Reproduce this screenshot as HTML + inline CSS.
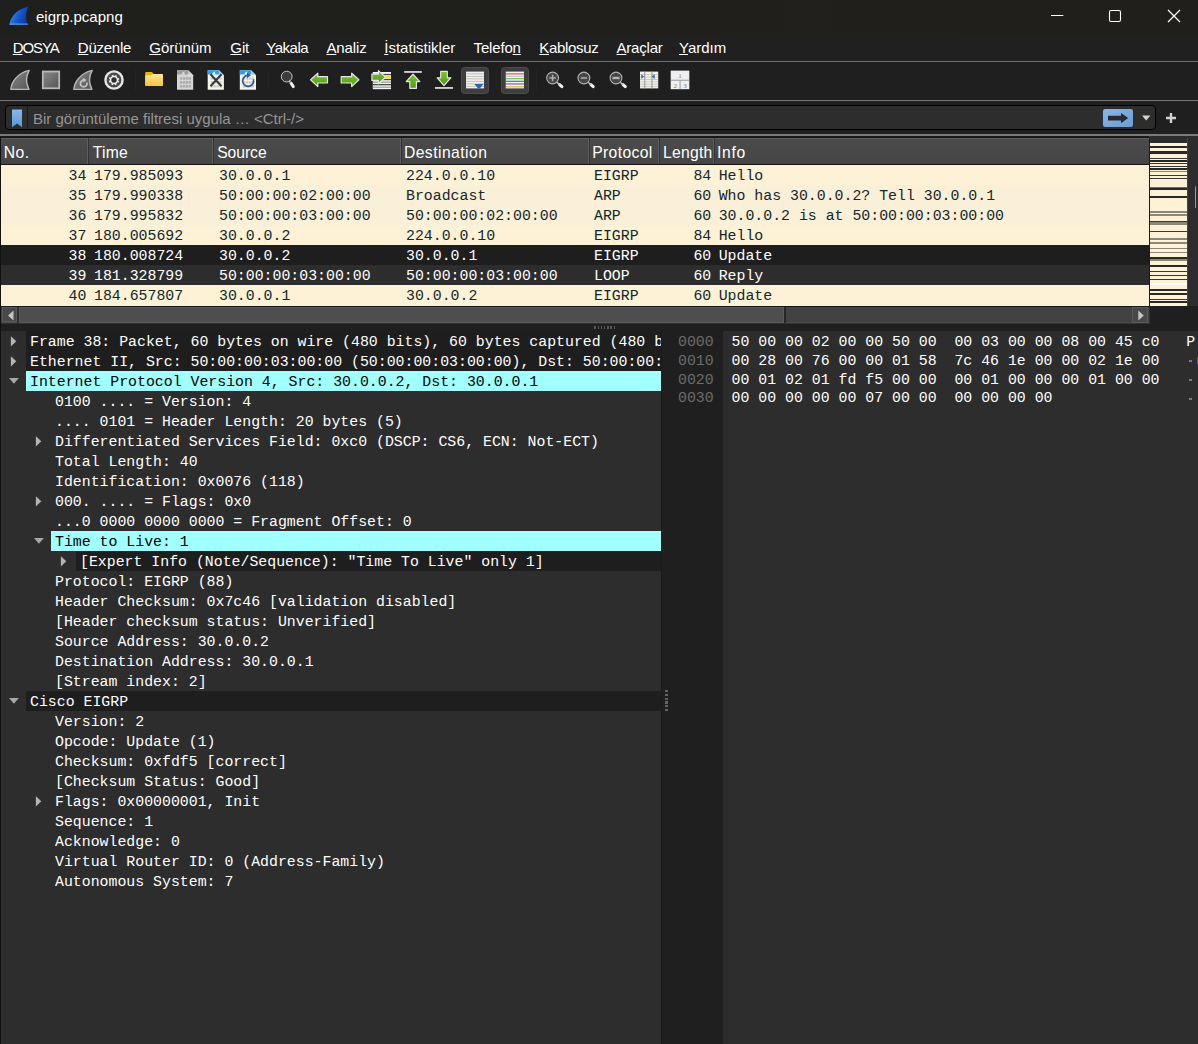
<!DOCTYPE html>
<html><head><meta charset="utf-8">
<style>
*{box-sizing:border-box;margin:0;padding:0}
html,body{width:1198px;height:1044px;overflow:hidden;background:#1f1f1f}
body{position:relative;font-family:"Liberation Sans",sans-serif;color:#fff}
.abs{position:absolute}
#title{left:0;top:0;width:1198px;height:35px;background:linear-gradient(90deg,#1f201b,#211f1b)}
#title .t{left:36px;top:8px;font-size:15px;color:#fff;white-space:nowrap}
#menu{left:0;top:35px;width:1198px;height:26px;background:#202020}
#menu span{position:absolute;top:4px;font-size:15px;color:#fff;white-space:nowrap}
#menu u{text-decoration:underline;text-underline-offset:1px;text-decoration-thickness:1px}
#tb{left:0;top:61px;width:1198px;height:40px;background:#1f1f1f;border-top:1px solid #707070}
#fl{left:0;top:100px;width:1198px;height:36px;background:#1f1f1f;border-top:1px solid #727272}
#fbox{left:5px;top:105px;width:1151px;height:25px;background:#2d2d2d;border:1px solid #000;border-radius:4px}
#fbox .ph{left:27px;top:4px;font-size:15px;color:#959595;white-space:nowrap}
#hl{left:0;top:134px;width:1198px;height:2px;background:#7a7a7a}
#hdr{left:1px;top:138px;width:1148px;height:26px;background:linear-gradient(#4b4b4b,#454545);border-top:1px solid #5e5e5e}
#hdr span{position:absolute;top:5px;font-size:15.7px;color:#fff;white-space:nowrap}
#hdr i{position:absolute;top:-1px;width:1px;height:26px;background:#5e5e5e}
#hdr b{position:absolute;top:-1px;width:1px;height:26px;background:#333}
.row{position:absolute;left:1px;width:1148px;height:20px;font-family:"Liberation Mono",monospace;font-size:14.87px;line-height:20px;color:#12272e;white-space:pre}
.row span{position:absolute;top:1px}
.tr{position:absolute;font-family:"Liberation Mono",monospace;font-size:14.87px;line-height:22px;color:#fff;white-space:pre;height:20px;overflow:hidden}
.hx{position:absolute;font-family:"Liberation Mono",monospace;font-size:14.87px;line-height:19px;color:#fff;white-space:pre}
</style></head><body>
<div id="title" class="abs"><div class="t abs">eigrp.pcapng</div>
<svg class="abs" style="left:0;top:0" width="1198" height="35" viewBox="0 0 1198 35">
<defs><linearGradient id="gws" x1="0" y1="0.2" x2="1" y2="0.6"><stop offset="0" stop-color="#3f95f5"/><stop offset="0.55" stop-color="#1257d0"/><stop offset="1" stop-color="#0a35a5"/></linearGradient></defs>
<path d="M9.4 24.8 C10 18.5 15 9.5 28.6 6.4 C25.4 12 25 19 28 24.8 Z" fill="url(#gws)"/>
<path d="M9.4 24.8 L28 24.8 L27.7 23.4 L9.8 23.6Z" fill="#6aaaf5" opacity="0.8"/>
<path d="M1051 15.5 h12.3" stroke="#fff" stroke-width="1"/>
<rect x="1109.5" y="10.5" width="11" height="11" rx="1.6" fill="none" stroke="#fff" stroke-width="1.1"/>
<path d="M1168 10 L1180 22 M1180 10 L1168 22" stroke="#fff" stroke-width="1.25"/>
</svg></div>
<div id="menu" class="abs">
<span style="left:12.7px;letter-spacing:-1.10px"><u>D</u>OSYA</span>
<span style="left:77.8px;letter-spacing:-0.25px"><u>D</u>üzenle</span>
<span style="left:149.3px;letter-spacing:-0.05px"><u>G</u>örünüm</span>
<span style="left:230.3px;letter-spacing:-0.10px"><u>G</u>it</span>
<span style="left:266.2px;letter-spacing:-0.45px"><u>Y</u>akala</span>
<span style="left:326.4px;letter-spacing:-0.10px"><u>A</u>naliz</span>
<span style="left:384.2px;letter-spacing:0.02px"><u>İ</u>statistikler</span>
<span style="left:473.6px;letter-spacing:-0.17px">Telefo<u>n</u></span>
<span style="left:539.3px;letter-spacing:-0.32px"><u>K</u>ablosuz</span>
<span style="left:616.5px;letter-spacing:-0.20px"><u>A</u>raçlar</span>
<span style="left:679.0px;letter-spacing:0.00px"><u>Y</u>ardım</span>
</div>
<div id="tb" class="abs"></div>
<div id="fl" class="abs"></div>
<svg class="abs" style="left:0;top:61px" width="1198" height="40" viewBox="0 61 1198 40">
<defs>
<linearGradient id="gfin" x1="0" y1="0" x2="1" y2="1"><stop offset="0" stop-color="#8a8a8a"/><stop offset="1" stop-color="#545454"/></linearGradient>
<linearGradient id="ggr" x1="0" y1="0" x2="0" y2="1"><stop offset="0" stop-color="#7cc62c"/><stop offset="1" stop-color="#4a9c12"/></linearGradient>
<linearGradient id="gfo" x1="0" y1="0" x2="0" y2="1"><stop offset="0" stop-color="#ffe594"/><stop offset="1" stop-color="#f6c43c"/></linearGradient>
</defs>
<rect x="461.5" y="67.5" width="27" height="26" rx="3" fill="#3e3e3e" stroke="#4c4c4c" stroke-width="1"/>
<rect x="501.5" y="67.5" width="27" height="26" rx="3" fill="#3e3e3e" stroke="#4c4c4c" stroke-width="1"/>
<rect x="135" y="70" width="1" height="20" fill="#252525"/>
<rect x="268" y="70" width="1" height="20" fill="#252525"/>
<rect x="495.5" y="70" width="1" height="20" fill="#252525"/>
<rect x="536" y="70" width="1" height="20" fill="#252525"/>
<path d="M10.8 89.4 C11.4 83 16.2 73.5 29.2 70.4 C26.0 76 25.8 83 28.9 89.4 Z" fill="url(#gfin)" stroke="#b8b8b8" stroke-width="1.4" stroke-linejoin="round"/>
<rect x="42.8" y="71.5" width="16.4" height="16.8" fill="url(#gfin)" stroke="#b8b8b8" stroke-width="1.8"/>
<path d="M73.8 89.4 C74.4 83 79.2 73.5 92.2 70.4 C89.0 76 88.8 83 91.9 89.4 Z" fill="url(#gfin)" stroke="#b8b8b8" stroke-width="1.4" stroke-linejoin="round"/>
<path d="M83.4 80.2 A3.3 3.3 0 1 0 86.9 82.6" fill="none" stroke="#c2c2c2" stroke-width="1.7"/><path d="M82.8 77.8 L86.8 80 L83.2 82.6Z" fill="#c2c2c2"/>
<circle cx="114" cy="80" r="8.6" fill="#474747" stroke="#e6e6e6" stroke-width="2.4"/>
<circle cx="114" cy="80" r="3.5" fill="#2e2e2e" stroke="#f0f0f0" stroke-width="1.6"/>
<circle cx="114" cy="80" r="4.7" fill="none" stroke="#f0f0f0" stroke-width="1.1" stroke-dasharray="1.846 1.846" transform="rotate(10 114 80)"/>
<path d="M145.2 73 q0 -1 1 -1 h5.2 q0.8 0 1.4 0.8 l0.9 1.2 h8.3 q1 0 1 1 v10 q0 1 -1 1 h-15.8 q-1 0 -1 -1z" fill="#f2b200"/>
<path d="M145.2 76.2 q0 -1 1 -1 h5 l1.6 -1.2 h9.2 q1 0 1 1 v10 q0 1 -1 1 h-15.8 q-1 0 -1 -1z" fill="url(#gfo)"/>
<path d="M177 70.2 h11.2 l5 5 v14.6 h-16.2z" fill="#d6d6d6"/>
<path d="M177 70.2 h11.2 l4.3 4.3 h-15.5z" fill="#9e9e9e"/>
<path d="M181.2 74.6 Q182.0 71.8 184.6 71.2 Q183.8 72.8 185.0 74.6Z" fill="#d6d6d6"/>
<path d="M188.2 70.2 v5 h5z" fill="#ececec" opacity="0.6"/>
<rect x="179.9" y="77.3" width="2.4" height="2.4" fill="#ababab"/>
<rect x="182.8" y="77.3" width="2.4" height="2.4" fill="#ababab"/>
<rect x="185.7" y="77.3" width="2.4" height="2.4" fill="#ababab"/>
<rect x="188.6" y="77.3" width="2.4" height="2.4" fill="#ababab"/>
<rect x="179.9" y="81.2" width="2.4" height="2.4" fill="#ababab"/>
<rect x="182.8" y="81.2" width="2.4" height="2.4" fill="#ababab"/>
<rect x="185.7" y="81.2" width="2.4" height="2.4" fill="#ababab"/>
<rect x="188.6" y="81.2" width="2.4" height="2.4" fill="#ababab"/>
<rect x="179.9" y="85.1" width="2.4" height="2.4" fill="#ababab"/>
<rect x="182.8" y="85.1" width="2.4" height="2.4" fill="#ababab"/>
<rect x="185.7" y="85.1" width="2.4" height="2.4" fill="#ababab"/>
<rect x="188.6" y="85.1" width="2.4" height="2.4" fill="#ababab"/>
<path d="M207.7 70.2 h11.2 l5 5 v14.6 h-16.2z" fill="#f5f5ea"/>
<path d="M207.7 70.2 h11.2 l4.3 4.3 h-15.5z" fill="#2f9fea"/>
<path d="M211.9 74.6 Q212.7 71.8 215.3 71.2 Q214.5 72.8 215.7 74.6Z" fill="#f5f5ea"/>
<path d="M218.89999999999998 70.2 v5 h5z" fill="#ececec" opacity="0.6"/>
<rect x="210.6" y="77.3" width="2.4" height="2.4" fill="#cdcdbe"/>
<rect x="213.5" y="77.3" width="2.4" height="2.4" fill="#cdcdbe"/>
<rect x="216.4" y="77.3" width="2.4" height="2.4" fill="#cdcdbe"/>
<rect x="219.3" y="77.3" width="2.4" height="2.4" fill="#cdcdbe"/>
<rect x="210.6" y="81.2" width="2.4" height="2.4" fill="#cdcdbe"/>
<rect x="213.5" y="81.2" width="2.4" height="2.4" fill="#cdcdbe"/>
<rect x="216.4" y="81.2" width="2.4" height="2.4" fill="#cdcdbe"/>
<rect x="219.3" y="81.2" width="2.4" height="2.4" fill="#cdcdbe"/>
<rect x="210.6" y="85.1" width="2.4" height="2.4" fill="#cdcdbe"/>
<rect x="213.5" y="85.1" width="2.4" height="2.4" fill="#cdcdbe"/>
<rect x="216.4" y="85.1" width="2.4" height="2.4" fill="#cdcdbe"/>
<rect x="219.3" y="85.1" width="2.4" height="2.4" fill="#cdcdbe"/>
<path d="M210.5 74.3 L221.5 86.2 M221.5 74.3 L210.5 86.2" stroke="#363b41" stroke-width="2.1" fill="none"/>
<path d="M239.8 70.2 h11.2 l5 5 v14.6 h-16.2z" fill="#f5f5ea"/>
<path d="M239.8 70.2 h11.2 l4.3 4.3 h-15.5z" fill="#2f9fea"/>
<path d="M244.0 74.6 Q244.8 71.8 247.4 71.2 Q246.6 72.8 247.8 74.6Z" fill="#f5f5ea"/>
<path d="M251.0 70.2 v5 h5z" fill="#ececec" opacity="0.6"/>
<rect x="242.7" y="77.3" width="2.4" height="2.4" fill="#cdcdbe"/>
<rect x="245.6" y="77.3" width="2.4" height="2.4" fill="#cdcdbe"/>
<rect x="248.5" y="77.3" width="2.4" height="2.4" fill="#cdcdbe"/>
<rect x="251.4" y="77.3" width="2.4" height="2.4" fill="#cdcdbe"/>
<rect x="242.7" y="81.2" width="2.4" height="2.4" fill="#cdcdbe"/>
<rect x="245.6" y="81.2" width="2.4" height="2.4" fill="#cdcdbe"/>
<rect x="248.5" y="81.2" width="2.4" height="2.4" fill="#cdcdbe"/>
<rect x="251.4" y="81.2" width="2.4" height="2.4" fill="#cdcdbe"/>
<rect x="242.7" y="85.1" width="2.4" height="2.4" fill="#cdcdbe"/>
<rect x="245.6" y="85.1" width="2.4" height="2.4" fill="#cdcdbe"/>
<rect x="248.5" y="85.1" width="2.4" height="2.4" fill="#cdcdbe"/>
<rect x="251.4" y="85.1" width="2.4" height="2.4" fill="#cdcdbe"/>
<path d="M253.4 79.2 A5.5 5.5 0 1 1 247.4 75.4" fill="none" stroke="#2a5aa2" stroke-width="1.7"/><path d="M247 72.6 L250.8 75.3 L247 78.2Z" fill="#2a5aa2"/>
<circle cx="286.7" cy="76.6" r="5.4" fill="#3c3c3c" stroke="#c8c8c8" stroke-width="1"/>
<path d="M291 83.2 L293.3 86.6" stroke="#f0f0f0" stroke-width="3" stroke-linecap="round"/>
<path d="M289 80.5 L291 83.2" stroke="#bdbdbd" stroke-width="1.3"/>
<path d="M310.6 79.8 L317.8 73.2 L317.8 76.7 L327.5 76.7 L327.5 83 L317.8 83 L317.8 86.6Z" fill="url(#ggr)" stroke="#e6e6e6" stroke-width="1.2" stroke-linejoin="round"/>
<path d="M358.9 79.8 L351.7 73.2 L351.7 76.7 L341.2 76.7 L341.2 83 L351.7 83 L351.7 86.6Z" fill="url(#ggr)" stroke="#e6e6e6" stroke-width="1.2" stroke-linejoin="round"/>
<rect x="372.8" y="72" width="18.2" height="17.2" fill="#f4f4f4"/>
<rect x="372.8" y="73.9" width="18.2" height="1.3" fill="#474d4e"/>
<rect x="372.8" y="76.6" width="18.2" height="1.3" fill="#b5b5b5"/>
<rect x="372.8" y="78.9" width="18.2" height="1.3" fill="#474d4e"/>
<rect x="372.8" y="81.5" width="18.2" height="1.3" fill="#9c9c9c"/>
<rect x="372.8" y="84" width="18.2" height="1.3" fill="#474d4e"/>
<rect x="372.8" y="86.6" width="18.2" height="1.3" fill="#a2a2a2"/>
<rect x="385.8" y="75.4" width="5.2" height="3.2" fill="#fbe030"/>
<path d="M385.6 77.2 L378.4 70.6 L378.4 74.2 L371.9 74.2 L371.9 80.4 L378.4 80.4 L378.4 83.8Z" fill="url(#ggr)" stroke="#e6e6e6" stroke-width="1.2" stroke-linejoin="round"/>
<rect x="404.2" y="71" width="17.6" height="1.9" fill="#cfcfcf"/>
<path d="M413 74.2 L419.8 81.6 L416.4 81.6 L416.4 88.3 L409.8 88.3 L409.8 81.6 L406.2 81.6Z" fill="url(#ggr)" stroke="#e6e6e6" stroke-width="1.2" stroke-linejoin="round"/>
<rect x="435" y="87" width="18" height="1.9" fill="#cfcfcf"/>
<path d="M444 85.6 L450.8 77.8 L447.3 77.8 L447.3 71.4 L440.7 71.4 L440.7 77.8 L437.2 77.8Z" fill="url(#ggr)" stroke="#e6e6e6" stroke-width="1.2" stroke-linejoin="round"/>
<rect x="466" y="71.6" width="18" height="16.8" fill="#f2f2f2"/>
<rect x="466" y="73.4" width="18" height="0.9" fill="#b9b9ae"/>
<rect x="466" y="75.9" width="18" height="0.9" fill="#b9b9ae"/>
<rect x="466" y="78.4" width="18" height="0.9" fill="#b9b9ae"/>
<rect x="466" y="80.9" width="18" height="0.9" fill="#b9b9ae"/>
<rect x="466" y="83.4" width="18" height="0.9" fill="#b9b9ae"/>
<rect x="466" y="85.9" width="18" height="0.9" fill="#b9b9ae"/>
<path d="M474.2 84 h9.4 l-3 3.2 v1.4 h-3.4 v-1.4z" fill="#2e62b5"/>
<rect x="505.8" y="71.6" width="18.2" height="16.8" fill="#f4f4f4"/>
<rect x="505.8" y="73.2" width="18.2" height="1.3" fill="#ee5f5f"/>
<rect x="505.8" y="75.6" width="18.2" height="1.3" fill="#b9c4dd"/>
<rect x="505.8" y="78" width="18.2" height="1.3" fill="#7dc83d"/>
<rect x="505.8" y="80.7" width="18.2" height="1.3" fill="#4a7fd0"/>
<rect x="505.8" y="83.3" width="18.2" height="1.3" fill="#8e6ea5"/>
<rect x="505.8" y="86.2" width="18.2" height="1.3" fill="#e0b83a"/>
<path d="M559.6 84.6 L561.9 86.7" stroke="#f2f2f2" stroke-width="3" stroke-linecap="round"/>
<path d="M556.6 82.0 L559.6 84.6" stroke="#c4c4c4" stroke-width="1.4"/>
<circle cx="552.6" cy="78" r="5.9" fill="#464646" stroke="#b4b4b4" stroke-width="1.1"/>
<path d="M549.4 78 h6.4 M552.6 74.8 v6.4" stroke="#b0b0b0" stroke-width="1.5"/>
<path d="M590.9 84.6 L593.2 86.7" stroke="#f2f2f2" stroke-width="3" stroke-linecap="round"/>
<path d="M587.9 82.0 L590.9 84.6" stroke="#c4c4c4" stroke-width="1.4"/>
<circle cx="583.9" cy="78" r="5.9" fill="#464646" stroke="#b4b4b4" stroke-width="1.1"/>
<path d="M580.7 78 h6.4" stroke="#b0b0b0" stroke-width="1.5"/>
<path d="M623.0 84.6 L625.3 86.7" stroke="#f2f2f2" stroke-width="3" stroke-linecap="round"/>
<path d="M620.0 82.0 L623.0 84.6" stroke="#c4c4c4" stroke-width="1.4"/>
<circle cx="616.0" cy="78" r="5.9" fill="#464646" stroke="#b4b4b4" stroke-width="1.1"/>
<path d="M612.5 78 h7" stroke="#b4b4b4" stroke-width="2.4"/>
<rect x="640" y="71.6" width="18.2" height="16.8" fill="#f1f1ec"/>
<rect x="640" y="74.2" width="18.2" height="0.8" fill="#c4c4ba"/>
<rect x="640" y="76.6" width="18.2" height="0.8" fill="#c4c4ba"/>
<rect x="640" y="79" width="18.2" height="0.8" fill="#c4c4ba"/>
<rect x="640" y="81.4" width="18.2" height="0.8" fill="#c4c4ba"/>
<rect x="640" y="83.8" width="18.2" height="0.8" fill="#c4c4ba"/>
<rect x="640" y="86.2" width="18.2" height="0.8" fill="#c4c4ba"/>
<rect x="644.2" y="71.6" width="1.1" height="16.8" fill="#9a9a9a"/>
<rect x="651.4" y="71.6" width="1.1" height="16.8" fill="#9a9a9a"/>
<path d="M641.3 74.2 L644 76.6 L641.3 79Z" fill="#2e62b5"/><path d="M654.6 74.2 L651.9 76.6 L654.6 79Z" fill="#2e62b5"/>
<rect x="670.7" y="70.6" width="18.6" height="18.6" fill="#efefef"/>
<rect x="670.7" y="79.7" width="18.6" height="1.1" fill="#9e9e9e"/><rect x="679.5" y="80.5" width="1.1" height="8.7" fill="#9e9e9e"/>
<g font-family="Liberation Serif" font-size="7" fill="#7a7a7a" text-anchor="middle"><text x="680" y="78">1</text><text x="675.3" y="87.6">2</text><text x="685" y="87.6">3</text></g>
</svg>
<div id="fbox" class="abs"><div class="ph abs">Bir görüntüleme filtresi uygula … &lt;Ctrl-/&gt;</div></div>
<svg class="abs" style="left:0;top:101px" width="1198" height="33" viewBox="0 101 1198 33">
<defs><linearGradient id="gbm" x1="0" y1="0" x2="0" y2="1"><stop offset="0" stop-color="#8ab8ea"/><stop offset="1" stop-color="#5a98d8"/></linearGradient>
<linearGradient id="gap" x1="0" y1="0" x2="1" y2="1"><stop offset="0" stop-color="#86b6ea"/><stop offset="1" stop-color="#6a9dd6"/></linearGradient></defs>
<path d="M12 109.4 h10 v17.8 l-5 -3.6 l-5 3.6z" fill="url(#gbm)"/>
<rect x="27" y="106" width="1" height="23" fill="#1a1a1a"/>
<rect x="1103" y="109" width="30" height="18" rx="2.2" fill="url(#gap)"/>
<path d="M1108 115.8 h13 v-2.8 l7.2 5.1 l-7.2 5.1 v-2.8 h-13z" fill="#2a2a2a"/>
<path d="M1142 115.4 h8.4 l-4.2 5z" fill="#d6d6ca"/>
<path d="M1166 118 h10 M1171 113 v10" stroke="#d2d2d2" stroke-width="2.4"/>
</svg>
<div id="hl" class="abs"></div>
<div id="hdr" class="abs">
<span style="left:2.7px;letter-spacing:0.50px">No.</span>
<i style="left:86.0px"></i><b style="left:87.0px"></b>
<span style="left:91.8px;letter-spacing:0.20px">Time</span>
<i style="left:211.0px"></i><b style="left:212.0px"></b>
<span style="left:216.2px;letter-spacing:-0.05px">Source</span>
<i style="left:399.0px"></i><b style="left:400.0px"></b>
<span style="left:402.9px;letter-spacing:0.45px">Destination</span>
<i style="left:587.0px"></i><b style="left:588.0px"></b>
<span style="left:591.2px;letter-spacing:0.37px">Protocol</span>
<i style="left:657.0px"></i><b style="left:658.0px"></b>
<span style="left:661.9px;letter-spacing:0.28px">Length</span>
<i style="left:712.0px"></i><b style="left:713.0px"></b>
<span style="left:716.0px;letter-spacing:0.65px">Info</span>
</div>
<div class="row" style="top:165px;background:#fdf2d6;color:#12272e">
<span style="left:67.5px">34</span>
<span style="left:93.0px">179.985093</span>
<span style="left:218.0px">30.0.0.1</span>
<span style="left:405.0px">224.0.0.10</span>
<span style="left:593.0px">EIGRP</span>
<span style="left:692.4px">84</span>
<span style="left:717.7px">Hello</span>
</div>
<div class="row" style="top:185px;background:#faf0d7;color:#12272e">
<span style="left:67.5px">35</span>
<span style="left:93.0px">179.990338</span>
<span style="left:218.0px">50:00:00:02:00:00</span>
<span style="left:405.0px">Broadcast</span>
<span style="left:593.0px">ARP</span>
<span style="left:692.4px">60</span>
<span style="left:717.7px">Who has 30.0.0.2? Tell 30.0.0.1</span>
</div>
<div class="row" style="top:205px;background:#faf0d7;color:#12272e">
<span style="left:67.5px">36</span>
<span style="left:93.0px">179.995832</span>
<span style="left:218.0px">50:00:00:03:00:00</span>
<span style="left:405.0px">50:00:00:02:00:00</span>
<span style="left:593.0px">ARP</span>
<span style="left:692.4px">60</span>
<span style="left:717.7px">30.0.0.2 is at 50:00:00:03:00:00</span>
</div>
<div class="row" style="top:225px;background:#fdf2d6;color:#12272e">
<span style="left:67.5px">37</span>
<span style="left:93.0px">180.005692</span>
<span style="left:218.0px">30.0.0.2</span>
<span style="left:405.0px">224.0.0.10</span>
<span style="left:593.0px">EIGRP</span>
<span style="left:692.4px">84</span>
<span style="left:717.7px">Hello</span>
</div>
<div class="row" style="top:245px;background:#1e1e1e;color:#ffffff">
<span style="left:67.5px">38</span>
<span style="left:93.0px">180.008724</span>
<span style="left:218.0px">30.0.0.2</span>
<span style="left:405.0px">30.0.0.1</span>
<span style="left:593.0px">EIGRP</span>
<span style="left:692.4px">60</span>
<span style="left:717.7px">Update</span>
</div>
<div class="row" style="top:265px;background:#2d2d2d;color:#ffffff">
<span style="left:67.5px">39</span>
<span style="left:93.0px">181.328799</span>
<span style="left:218.0px">50:00:00:03:00:00</span>
<span style="left:405.0px">50:00:00:03:00:00</span>
<span style="left:593.0px">LOOP</span>
<span style="left:692.4px">60</span>
<span style="left:717.7px">Reply</span>
</div>
<div class="row" style="top:285px;background:#fdf2d6;color:#12272e">
<span style="left:67.5px">40</span>
<span style="left:93.0px">184.657807</span>
<span style="left:218.0px">30.0.0.1</span>
<span style="left:405.0px">30.0.0.2</span>
<span style="left:593.0px">EIGRP</span>
<span style="left:692.4px">60</span>
<span style="left:717.7px">Update</span>
</div>
<div class="abs" style="left:0;top:136px;width:1px;height:908px;background:#121212"></div>
<div class="abs" style="left:0;top:136px;width:1198px;height:2px;background:#191919"></div>
<div class="abs" style="left:1px;top:164px;width:1148px;height:1px;background:#141414"></div>
<div class="abs" style="left:1149px;top:136px;width:49px;height:170px;background:#2d2d2d"></div>
<div class="abs" style="left:1150px;top:143px;width:37px;height:163px;background:#fdf2d6"></div>
<div class="abs" style="left:1150px;top:146px;width:37px;height:2px;background:#282828"></div>
<div class="abs" style="left:1150px;top:151px;width:37px;height:3px;background:#282828"></div>
<div class="abs" style="left:1150px;top:158px;width:37px;height:1px;background:#3a3833"></div>
<div class="abs" style="left:1150px;top:160px;width:37px;height:2px;background:#282828"></div>
<div class="abs" style="left:1150px;top:163px;width:37px;height:1px;background:#3a3833"></div>
<div class="abs" style="left:1150px;top:166px;width:37px;height:1px;background:#3a3833"></div>
<div class="abs" style="left:1150px;top:168px;width:37px;height:2px;background:#282828"></div>
<div class="abs" style="left:1150px;top:171px;width:37px;height:1px;background:#8e8778"></div>
<div class="abs" style="left:1150px;top:175px;width:37px;height:1px;background:#3a3833"></div>
<div class="abs" style="left:1150px;top:178px;width:37px;height:1px;background:#3a3833"></div>
<div class="abs" style="left:1150px;top:181px;width:37px;height:6px;background:#faf0d7"></div>
<div class="abs" style="left:1150px;top:187px;width:37px;height:1px;background:#1f7fdc"></div>
<div class="abs" style="left:1150px;top:188px;width:37px;height:2px;background:#282828"></div>
<div class="abs" style="left:1150px;top:196px;width:37px;height:2px;background:#282828"></div>
<div class="abs" style="left:1150px;top:211px;width:37px;height:2px;background:#8e8778"></div>
<div class="abs" style="left:1150px;top:214px;width:37px;height:2px;background:#8e8778"></div>
<div class="abs" style="left:1150px;top:221px;width:37px;height:1px;background:#3a3833"></div>
<div class="abs" style="left:1150px;top:222px;width:37px;height:3px;background:#8e8778"></div>
<div class="abs" style="left:1150px;top:231px;width:37px;height:1px;background:#3a3833"></div>
<div class="abs" style="left:1150px;top:238px;width:37px;height:2px;background:#8e8778"></div>
<div class="abs" style="left:1150px;top:242px;width:37px;height:2px;background:#8e8778"></div>
<div class="abs" style="left:1150px;top:248px;width:37px;height:1px;background:#8e8778"></div>
<div class="abs" style="left:1150px;top:252px;width:37px;height:1px;background:#8e8778"></div>
<div class="abs" style="left:1150px;top:257px;width:37px;height:2px;background:#282828"></div>
<div class="abs" style="left:1150px;top:259px;width:37px;height:2px;background:#8e8778"></div>
<div class="abs" style="left:1150px;top:265px;width:37px;height:2px;background:#282828"></div>
<div class="abs" style="left:1150px;top:271px;width:37px;height:1px;background:#3a3833"></div>
<div class="abs" style="left:1150px;top:275px;width:37px;height:1px;background:#3a3833"></div>
<div class="abs" style="left:1150px;top:279px;width:37px;height:1px;background:#3a3833"></div>
<div class="abs" style="left:1150px;top:283px;width:37px;height:2px;background:#ffffff"></div>
<div class="abs" style="left:1150px;top:289px;width:37px;height:2px;background:#282828"></div>
<div class="abs" style="left:1150px;top:293px;width:37px;height:2px;background:#282828"></div>
<div class="abs" style="left:1150px;top:299px;width:37px;height:1px;background:#3a3833"></div>
<div class="abs" style="left:1150px;top:301px;width:37px;height:2px;background:#282828"></div>
<div class="abs" style="left:1187px;top:138px;width:1px;height:168px;background:#444"></div>
<div class="abs" style="left:1149px;top:138px;width:1px;height:168px;background:#1c1c1c"></div>
<div class="abs" style="left:1194.5px;top:186px;width:1.5px;height:22px;background:#9a9a9a;border-radius:1px"></div>
<div class="abs" style="left:1px;top:305px;width:1148px;height:1px;background:#fdf2d6"></div>
<div class="abs" style="left:1px;top:306px;width:1148px;height:1px;background:#161616"></div>
<div class="abs" style="left:1px;top:307px;width:1148px;height:16px;background:#424242;border-bottom:1px solid #4c4c4c"></div>
<div class="abs" style="left:1149px;top:307px;width:1px;height:17px;background:#333"></div>
<div class="abs" style="left:1px;top:323px;width:1148px;height:1px;background:#333"></div>
<div class="abs" style="left:2px;top:307px;width:15px;height:15px;background:#484848;border:1px solid #5a5a5a"></div>
<svg class="abs" style="left:8px;top:310px" width="6" height="11" viewBox="0 0 6 11"><path d="M0 5.5 L5.5 0.5 L5.5 10.5Z" fill="#c6c6c6"/></svg>
<div class="abs" style="left:17px;top:307px;width:2px;height:16px;background:#303030"></div>
<div class="abs" style="left:18.5px;top:307px;width:765.5px;height:15.5px;background:#4e4e4e;border:1px solid #5a5a5a"></div>
<div class="abs" style="left:784px;top:307px;width:2px;height:16px;background:#262626"></div>
<div class="abs" style="left:1132px;top:307px;width:15.5px;height:15.5px;background:#484848;border:1px solid #5a5a5a"></div>
<svg class="abs" style="left:1137.5px;top:310px" width="6" height="11" viewBox="0 0 6 11"><path d="M5.8 5.5 L0.3 0.5 L0.3 10.5Z" fill="#c6c6c6"/></svg>
<div class="abs" style="left:594.3px;top:326px;width:1.6px;height:2.6px;background:#585858"></div>
<div class="abs" style="left:597.5px;top:326px;width:1.6px;height:2.6px;background:#585858"></div>
<div class="abs" style="left:600.7px;top:326px;width:1.6px;height:2.6px;background:#585858"></div>
<div class="abs" style="left:603.9px;top:326px;width:1.6px;height:2.6px;background:#585858"></div>
<div class="abs" style="left:607.1px;top:326px;width:1.6px;height:2.6px;background:#585858"></div>
<div class="abs" style="left:610.3px;top:326px;width:1.6px;height:2.6px;background:#585858"></div>
<div class="abs" style="left:613.5px;top:326px;width:1.6px;height:2.6px;background:#585858"></div>
<div class="abs" style="left:1px;top:331px;width:660px;height:713px;background:#2d2d2d"></div>
<div class="abs" style="left:668px;top:331px;width:530px;height:713px;background:#2d2d2d"></div>
<div class="abs" style="left:661px;top:331px;width:62px;height:713px;background:#1f1f1f"></div>
<div class="abs" style="left:661px;top:331px;width:1px;height:713px;background:#1a1a1a"></div>
<div class="abs" style="left:26px;top:331px;width:635px;height:20px;background:#1e1e1e"></div>
<div class="tr" style="left:30.0px;top:331px;width:631.0px;color:#fff">Frame 38: Packet, 60 bytes on wire (480 bits), 60 bytes captured (480 bits)</div>
<svg class="abs" style="left:10px;top:336px" width="8" height="11" viewBox="0 0 8 11"><path d="M0.9 0.2 L6.3 5.3 L0.9 10.4Z" fill="#b4b4b4"/></svg>
<div class="abs" style="left:26px;top:351px;width:635px;height:20px;background:#1e1e1e"></div>
<div class="tr" style="left:30.0px;top:351px;width:631.0px;color:#fff">Ethernet II, Src: 50:00:00:03:00:00 (50:00:00:03:00:00), Dst: 50:00:00:02:00:00</div>
<svg class="abs" style="left:10px;top:356px" width="8" height="11" viewBox="0 0 8 11"><path d="M0.9 0.2 L6.3 5.3 L0.9 10.4Z" fill="#b4b4b4"/></svg>
<div class="abs" style="left:26px;top:371px;width:635px;height:20px;background:#a0ffff"></div>
<div class="tr" style="left:30.0px;top:371px;width:631.0px;color:#000">Internet Protocol Version 4, Src: 30.0.0.2, Dst: 30.0.0.1</div>
<svg class="abs" style="left:8.6px;top:378.1px" width="11" height="7" viewBox="0 0 11 7"><path d="M0 0 L9.8 0 L4.9 5.7Z" fill="#a8a8a8"/></svg>
<div class="tr" style="left:55.0px;top:391px;width:606.0px;color:#fff">0100 .... = Version: 4</div>
<div class="tr" style="left:55.0px;top:411px;width:606.0px;color:#fff">.... 0101 = Header Length: 20 bytes (5)</div>
<div class="tr" style="left:55.0px;top:431px;width:606.0px;color:#fff">Differentiated Services Field: 0xc0 (DSCP: CS6, ECN: Not-ECT)</div>
<svg class="abs" style="left:35px;top:436px" width="8" height="11" viewBox="0 0 8 11"><path d="M0.9 0.2 L6.3 5.3 L0.9 10.4Z" fill="#b4b4b4"/></svg>
<div class="tr" style="left:55.0px;top:451px;width:606.0px;color:#fff">Total Length: 40</div>
<div class="tr" style="left:55.0px;top:471px;width:606.0px;color:#fff">Identification: 0x0076 (118)</div>
<div class="tr" style="left:55.0px;top:491px;width:606.0px;color:#fff">000. .... = Flags: 0x0</div>
<svg class="abs" style="left:35px;top:496px" width="8" height="11" viewBox="0 0 8 11"><path d="M0.9 0.2 L6.3 5.3 L0.9 10.4Z" fill="#b4b4b4"/></svg>
<div class="tr" style="left:55.0px;top:511px;width:606.0px;color:#fff">...0 0000 0000 0000 = Fragment Offset: 0</div>
<div class="abs" style="left:51px;top:531px;width:610px;height:20px;background:#a0ffff"></div>
<div class="tr" style="left:55.0px;top:531px;width:606.0px;color:#000">Time to Live: 1</div>
<svg class="abs" style="left:33.6px;top:538.1px" width="11" height="7" viewBox="0 0 11 7"><path d="M0 0 L9.8 0 L4.9 5.7Z" fill="#a8a8a8"/></svg>
<div class="abs" style="left:76px;top:551px;width:585px;height:20px;background:#1e1e1e"></div>
<div class="tr" style="left:80.0px;top:551px;width:581.0px;color:#fff">[Expert Info (Note/Sequence): &quot;Time To Live&quot; only 1]</div>
<svg class="abs" style="left:60px;top:556px" width="8" height="11" viewBox="0 0 8 11"><path d="M0.9 0.2 L6.3 5.3 L0.9 10.4Z" fill="#b4b4b4"/></svg>
<div class="tr" style="left:55.0px;top:571px;width:606.0px;color:#fff">Protocol: EIGRP (88)</div>
<div class="tr" style="left:55.0px;top:591px;width:606.0px;color:#fff">Header Checksum: 0x7c46 [validation disabled]</div>
<div class="tr" style="left:55.0px;top:611px;width:606.0px;color:#fff">[Header checksum status: Unverified]</div>
<div class="tr" style="left:55.0px;top:631px;width:606.0px;color:#fff">Source Address: 30.0.0.2</div>
<div class="tr" style="left:55.0px;top:651px;width:606.0px;color:#fff">Destination Address: 30.0.0.1</div>
<div class="tr" style="left:55.0px;top:671px;width:606.0px;color:#fff">[Stream index: 2]</div>
<div class="abs" style="left:26px;top:691px;width:635px;height:20px;background:#1e1e1e"></div>
<div class="tr" style="left:30.0px;top:691px;width:631.0px;color:#fff">Cisco EIGRP</div>
<svg class="abs" style="left:8.6px;top:698.1px" width="11" height="7" viewBox="0 0 11 7"><path d="M0 0 L9.8 0 L4.9 5.7Z" fill="#a8a8a8"/></svg>
<div class="tr" style="left:55.0px;top:711px;width:606.0px;color:#fff">Version: 2</div>
<div class="tr" style="left:55.0px;top:731px;width:606.0px;color:#fff">Opcode: Update (1)</div>
<div class="tr" style="left:55.0px;top:751px;width:606.0px;color:#fff">Checksum: 0xfdf5 [correct]</div>
<div class="tr" style="left:55.0px;top:771px;width:606.0px;color:#fff">[Checksum Status: Good]</div>
<div class="tr" style="left:55.0px;top:791px;width:606.0px;color:#fff">Flags: 0x00000001, Init</div>
<svg class="abs" style="left:35px;top:796px" width="8" height="11" viewBox="0 0 8 11"><path d="M0.9 0.2 L6.3 5.3 L0.9 10.4Z" fill="#b4b4b4"/></svg>
<div class="tr" style="left:55.0px;top:811px;width:606.0px;color:#fff">Sequence: 1</div>
<div class="tr" style="left:55.0px;top:831px;width:606.0px;color:#fff">Acknowledge: 0</div>
<div class="tr" style="left:55.0px;top:851px;width:606.0px;color:#fff">Virtual Router ID: 0 (Address-Family)</div>
<div class="tr" style="left:55.0px;top:871px;width:606.0px;color:#fff">Autonomous System: 7</div>
<div class="hx" style="left:678px;top:333.1px;color:#6c6c6c">0000</div>
<div class="hx" style="left:731.5px;top:333.1px">50 00 00 02 00 00 50 00  00 03 00 00 08 00 45 c0</div>
<div class="hx" style="left:678px;top:351.9px;color:#6c6c6c">0010</div>
<div class="hx" style="left:731.5px;top:351.9px">00 28 00 76 00 00 01 58  7c 46 1e 00 00 02 1e 00</div>
<div class="hx" style="left:678px;top:370.6px;color:#6c6c6c">0020</div>
<div class="hx" style="left:731.5px;top:370.6px">00 01 02 01 fd f5 00 00  00 01 00 00 00 01 00 00</div>
<div class="hx" style="left:678px;top:389.4px;color:#6c6c6c">0030</div>
<div class="hx" style="left:731.5px;top:389.4px">00 00 00 00 00 07 00 00  00 00 00 00</div>
<div class="hx" style="left:1186.3px;top:333.1px">P</div>
<div class="abs" style="left:1189.4px;top:360.0px;width:2.6px;height:2.4px;background:#7c7c7c"></div>
<div class="abs" style="left:1189.4px;top:379.0px;width:2.6px;height:2.4px;background:#7c7c7c"></div>
<div class="abs" style="left:1189.4px;top:397.5px;width:2.6px;height:2.4px;background:#7c7c7c"></div>
<div class="abs" style="left:1197px;top:357px;width:1px;height:7px;background:#3a55d8"></div>
<div class="abs" style="left:665px;top:690.0px;width:3px;height:2.4px;background:#626262"></div>
<div class="abs" style="left:665px;top:693.8px;width:3px;height:2.4px;background:#626262"></div>
<div class="abs" style="left:665px;top:697.5px;width:3px;height:2.4px;background:#626262"></div>
<div class="abs" style="left:665px;top:701.2px;width:3px;height:2.4px;background:#626262"></div>
<div class="abs" style="left:665px;top:705.0px;width:3px;height:2.4px;background:#626262"></div>
<div class="abs" style="left:665px;top:708.8px;width:3px;height:2.4px;background:#626262"></div>
</body></html>
